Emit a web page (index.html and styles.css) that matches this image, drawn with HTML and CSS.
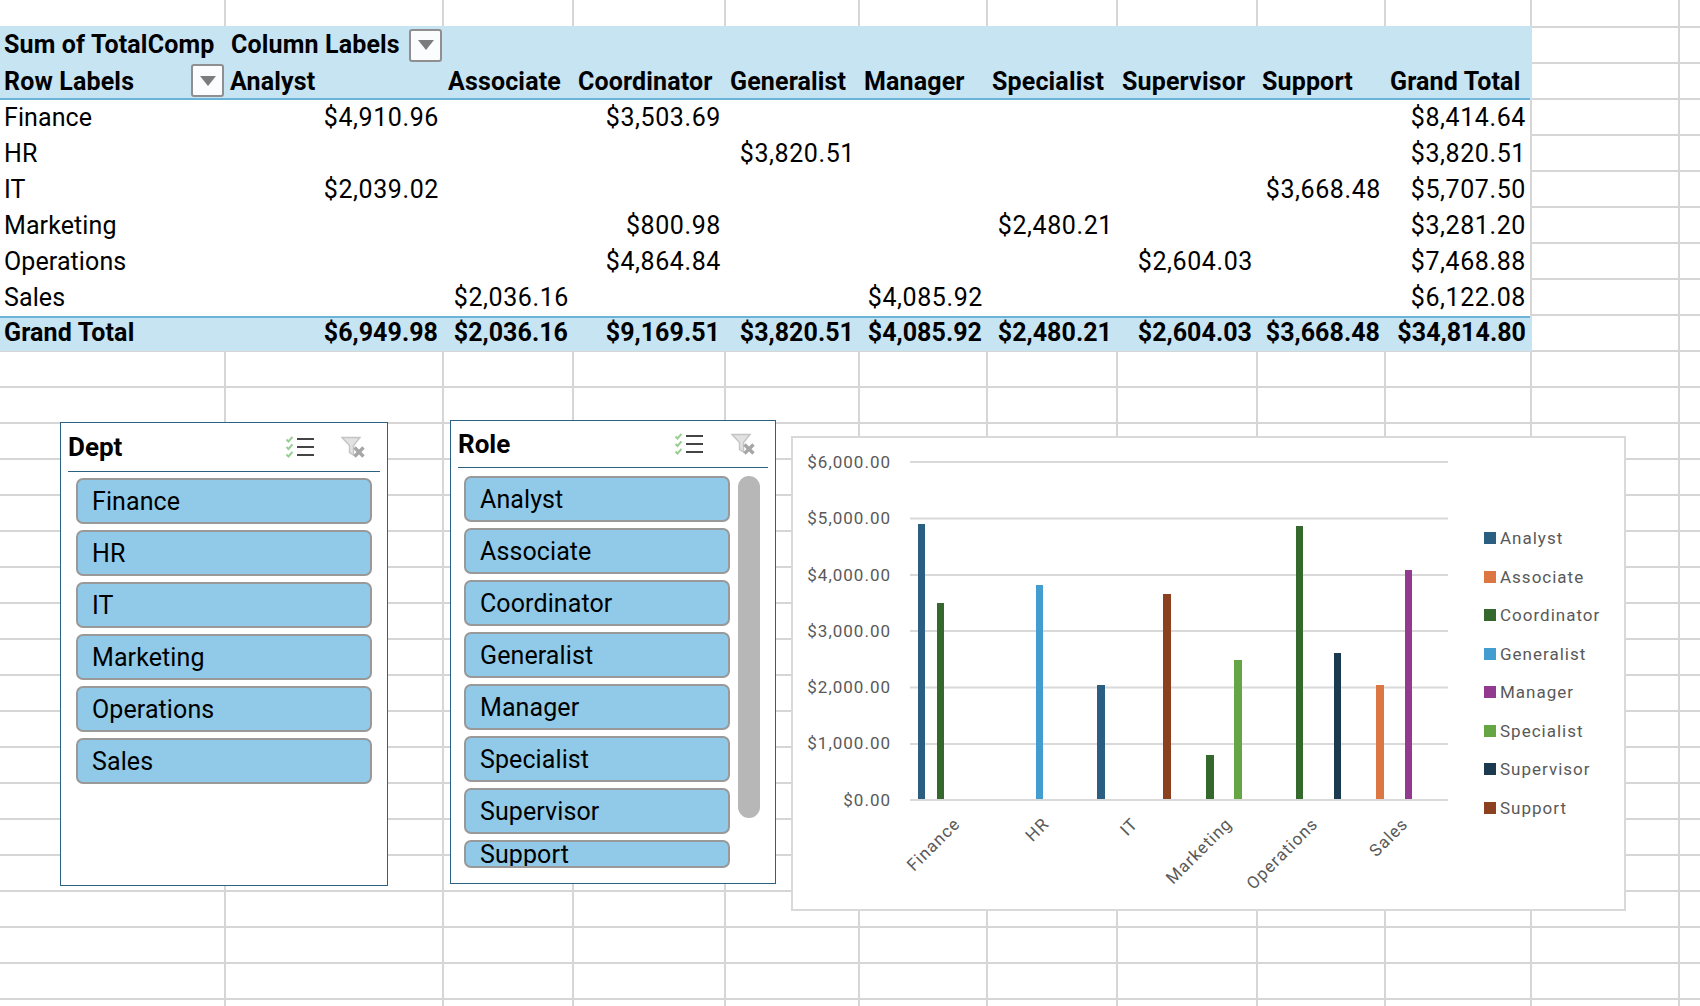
FILE: index.html
```html
<!DOCTYPE html>
<html lang="en">
<head>
<meta charset="utf-8">
<title>Pivot table</title>
<link rel="stylesheet" href="styles.css">
</head>
<body>
<main class="sheet">
  <section class="pivot">
    <div class="row head head-top">
      <div class="cell strong">Sum of TotalComp</div>
      <div class="cell strong span-col">Column Labels <button class="drop drop-col" aria-label="Filter columns"><span class="tri"></span></button></div>
    </div>
    <div class="row head head-bottom">
      <div class="cell strong span-row">Row Labels <button class="drop drop-row" aria-label="Filter rows"><span class="tri"></span></button></div>
      <div class="cell strong">Analyst</div>
      <div class="cell strong">Associate</div>
      <div class="cell strong">Coordinator</div>
      <div class="cell strong">Generalist</div>
      <div class="cell strong">Manager</div>
      <div class="cell strong">Specialist</div>
      <div class="cell strong">Supervisor</div>
      <div class="cell strong">Support</div>
      <div class="cell strong">Grand Total</div>
    </div>
    <div class="row body">
      <div class="cell">Finance</div><div class="cell num">$4,910.96</div><div class="cell num"></div><div class="cell num">$3,503.69</div><div class="cell num"></div><div class="cell num"></div><div class="cell num"></div><div class="cell num"></div><div class="cell num"></div><div class="cell num">$8,414.64</div>
    </div>
    <div class="row body">
      <div class="cell">HR</div><div class="cell num"></div><div class="cell num"></div><div class="cell num"></div><div class="cell num">$3,820.51</div><div class="cell num"></div><div class="cell num"></div><div class="cell num"></div><div class="cell num"></div><div class="cell num">$3,820.51</div>
    </div>
    <div class="row body">
      <div class="cell">IT</div><div class="cell num">$2,039.02</div><div class="cell num"></div><div class="cell num"></div><div class="cell num"></div><div class="cell num"></div><div class="cell num"></div><div class="cell num"></div><div class="cell num">$3,668.48</div><div class="cell num">$5,707.50</div>
    </div>
    <div class="row body">
      <div class="cell">Marketing</div><div class="cell num"></div><div class="cell num"></div><div class="cell num">$800.98</div><div class="cell num"></div><div class="cell num"></div><div class="cell num">$2,480.21</div><div class="cell num"></div><div class="cell num"></div><div class="cell num">$3,281.20</div>
    </div>
    <div class="row body">
      <div class="cell">Operations</div><div class="cell num"></div><div class="cell num"></div><div class="cell num">$4,864.84</div><div class="cell num"></div><div class="cell num"></div><div class="cell num"></div><div class="cell num">$2,604.03</div><div class="cell num"></div><div class="cell num">$7,468.88</div>
    </div>
    <div class="row body">
      <div class="cell">Sales</div><div class="cell num"></div><div class="cell num">$2,036.16</div><div class="cell num"></div><div class="cell num"></div><div class="cell num">$4,085.92</div><div class="cell num"></div><div class="cell num"></div><div class="cell num"></div><div class="cell num">$6,122.08</div>
    </div>
    <div class="row total">
      <div class="cell strong">Grand Total</div><div class="cell strong num">$6,949.98</div><div class="cell strong num">$2,036.16</div><div class="cell strong num">$9,169.51</div><div class="cell strong num">$3,820.51</div><div class="cell strong num">$4,085.92</div><div class="cell strong num">$2,480.21</div><div class="cell strong num">$2,604.03</div><div class="cell strong num">$3,668.48</div><div class="cell strong num">$34,814.80</div>
    </div>
  </section>

  <section class="slicer slicer-dept">
    <header class="slicer-head">
      <h2 class="slicer-title">Dept</h2>
      <svg class="icon icon-multi" viewBox="0 0 28 22" aria-hidden="true"><path class="ic-check" d="M0.5 3.5 2.5 5.5 6.5 0.8M0.5 11 2.5 13 6.5 8.3M0.5 18.5 2.5 20.5 6.5 15.8"/><path class="ic-line" d="M11 3H28M11 11H28M11 19H28"/></svg>
      <svg class="icon icon-clear" viewBox="0 0 24 22" aria-hidden="true"><path class="ic-funnel" d="M1 1.5H19L12.5 9.5V19L8.5 16.5V9.5Z"/><path class="ic-x" d="M13.5 11.5 22.5 20.5M22.5 11.5 13.5 20.5"/></svg>
    </header>
    <div class="slicer-body">
      <div class="slicer-list">
        <div class="chip">Finance</div>
        <div class="chip">HR</div>
        <div class="chip">IT</div>
        <div class="chip">Marketing</div>
        <div class="chip">Operations</div>
        <div class="chip">Sales</div>
      </div>
    </div>
  </section>

  <section class="slicer slicer-role">
    <header class="slicer-head">
      <h2 class="slicer-title">Role</h2>
      <svg class="icon icon-multi" viewBox="0 0 28 22" aria-hidden="true"><path class="ic-check" d="M0.5 3.5 2.5 5.5 6.5 0.8M0.5 11 2.5 13 6.5 8.3M0.5 18.5 2.5 20.5 6.5 15.8"/><path class="ic-line" d="M11 3H28M11 11H28M11 19H28"/></svg>
      <svg class="icon icon-clear" viewBox="0 0 24 22" aria-hidden="true"><path class="ic-funnel" d="M1 1.5H19L12.5 9.5V19L8.5 16.5V9.5Z"/><path class="ic-x" d="M13.5 11.5 22.5 20.5M22.5 11.5 13.5 20.5"/></svg>
    </header>
    <div class="slicer-body">
      <div class="slicer-list">
        <div class="chip">Analyst</div>
        <div class="chip">Associate</div>
        <div class="chip">Coordinator</div>
        <div class="chip">Generalist</div>
        <div class="chip">Manager</div>
        <div class="chip">Specialist</div>
        <div class="chip">Supervisor</div>
        <div class="chip chip-cut">Support</div>
      </div>
      <div class="scroll-thumb"></div>
    </div>
  </section>

  <figure class="chart">
    <svg class="plot" viewBox="793 438 690 473" aria-label="Clustered column chart">
      <g class="grid-lines">
        <path d="M910 462H1448M910 518.5H1448M910 575H1448M910 631H1448M910 687.5H1448M910 744H1448M910 800H1448"/>
      </g>
      <g class="y-labels">
        <text x="891" y="468">$6,000.00</text>
        <text x="891" y="524">$5,000.00</text>
        <text x="891" y="580.5">$4,000.00</text>
        <text x="891" y="637">$3,000.00</text>
        <text x="891" y="693">$2,000.00</text>
        <text x="891" y="749">$1,000.00</text>
        <text x="891" y="805.5">$0.00</text>
      </g>
      <g>
        <rect class="s-analyst" x="918" y="524" width="7" height="275"/>
        <rect class="s-coord" x="937" y="603" width="7" height="196"/>
        <rect class="s-general" x="1036" y="585" width="7" height="214"/>
        <rect class="s-analyst" x="1097" y="685" width="8" height="114"/>
        <rect class="s-support" x="1163" y="594" width="8" height="205"/>
        <rect class="s-coord" x="1206" y="755" width="8" height="44"/>
        <rect class="s-spec" x="1234" y="660" width="8" height="139"/>
        <rect class="s-coord" x="1296" y="526" width="7" height="273"/>
        <rect class="s-super" x="1334" y="653" width="7" height="146"/>
        <rect class="s-assoc" x="1376" y="685" width="8" height="114"/>
        <rect class="s-manager" x="1405" y="570" width="7" height="229"/>
      </g>
      <g class="x-labels">
        <text transform="translate(961 825) rotate(-45)">Finance</text>
        <text transform="translate(1050 825) rotate(-45)">HR</text>
        <text transform="translate(1139 825) rotate(-45)">IT</text>
        <text transform="translate(1233 825) rotate(-45)">Marketing</text>
        <text transform="translate(1319 825) rotate(-45)">Operations</text>
        <text transform="translate(1409 825) rotate(-45)">Sales</text>
      </g>
    </svg>
    <ul class="legend">
      <li class="legend-item"><i class="swatch bg-analyst"></i>Analyst</li>
      <li class="legend-item"><i class="swatch bg-assoc"></i>Associate</li>
      <li class="legend-item"><i class="swatch bg-coord"></i>Coordinator</li>
      <li class="legend-item"><i class="swatch bg-general"></i>Generalist</li>
      <li class="legend-item"><i class="swatch bg-manager"></i>Manager</li>
      <li class="legend-item"><i class="swatch bg-spec"></i>Specialist</li>
      <li class="legend-item"><i class="swatch bg-super"></i>Supervisor</li>
      <li class="legend-item"><i class="swatch bg-support"></i>Support</li>
    </ul>
  </figure>
</main>
</body>
</html>
```

FILE: styles.css
```css
:root {
  --line: #d6d6d6;
  --fill: #c7e4f3;
  --blue-line: #6cb3da;
  --analyst: #2a5f82;
  --assoc: #dc7642;
  --coord: #35682d;
  --general: #449dd1;
  --manager: #923a90;
  --spec: #65a543;
  --super: #1b3a4f;
  --support: #8b411f;
}

* { box-sizing: border-box; }

html, body { margin: 0; padding: 0; background: #fff; }

body {
  font-family: Roboto, "Liberation Sans", sans-serif;
  color: #000;
  overflow: hidden;
}

.sheet {
  position: relative;
  width: 1700px;
  height: 1006px;
  padding-top: 26px;
  overflow: hidden;
  --v: linear-gradient(var(--line), var(--line));
  background:
    var(--v) 224px 0 / 2px 100% no-repeat,
    var(--v) 442px 0 / 2px 100% no-repeat,
    var(--v) 572px 0 / 2px 100% no-repeat,
    var(--v) 724px 0 / 2px 100% no-repeat,
    var(--v) 858px 0 / 2px 100% no-repeat,
    var(--v) 986px 0 / 2px 100% no-repeat,
    var(--v) 1116px 0 / 2px 100% no-repeat,
    var(--v) 1256px 0 / 2px 100% no-repeat,
    var(--v) 1384px 0 / 2px 100% no-repeat,
    var(--v) 1530px 0 / 2px 100% no-repeat,
    var(--v) 1678px 0 / 2px 100% no-repeat,
    repeating-linear-gradient(to bottom, transparent 0 26px, var(--line) 26px 28px, transparent 28px 36px);
}

/* Pivot table */
.pivot { width: 1530px; }

.row {
  display: grid;
  grid-template-columns: 225px 218px 130px 152px 134px 128px 130px 140px 128px 145px;
  align-items: center;
  height: 36px;
  font-size: 25px;
  line-height: 36px;
}

.head { background: var(--fill); box-shadow: 2px 0 0 var(--fill); }
.head-top { height: 37px; }
.head-bottom { height: 37px; padding-top: 1px; border-bottom: 2px solid var(--blue-line); box-shadow: 2px 0 0 var(--fill); }
.body { background: #fff; }
.total {
  height: 35px;
  line-height: 30px;
  align-content: start;
  background: var(--fill);
  border-top: 2px solid var(--blue-line);
  box-shadow: 2px 0 0 var(--fill);
}

.cell {
  padding: 0 5px;
  white-space: nowrap;
  letter-spacing: 0.1px;
}
.cell:first-child { padding-left: 4px; }
.num { text-align: right; letter-spacing: 0.6px; padding-right: 4px; }
.strong { font-weight: 700; letter-spacing: 0.15px; }
.strong.num { letter-spacing: 0.05px; padding-right: 5px; }
.strong.num:last-child { padding-right: 4px; }

.span-col {
  grid-column: 2 / span 2;
  position: relative;
  padding-left: 6px;
}
.span-row { position: relative; }

.drop {
  position: absolute;
  width: 33px;
  height: 33px;
  padding: 0;
  background: #fbfcfd;
  border: 2px solid #8f8f8f;
  border-radius: 3px;
  display: flex;
  align-items: center;
  justify-content: center;
}
.drop-col { left: 184px; top: 2px; }
.drop-row { left: 191px; top: 0; }
.tri {
  width: 0;
  height: 0;
  border-left: 8px solid transparent;
  border-right: 8px solid transparent;
  border-top: 10px solid #7c7c7c;
}

/* Slicers */
.slicer {
  position: absolute;
  background: #fff;
  border: 1px solid #2c6183;
  padding: 0 7px;
}
.slicer-dept { left: 60px; top: 422px; width: 328px; height: 464px; }
.slicer-role { left: 450px; top: 420px; width: 326px; height: 464px; }

.slicer-head {
  display: flex;
  align-items: center;
  border-bottom: 1px solid #2c6183;
}
.slicer-dept .slicer-head { height: 49px; }
.slicer-role .slicer-head { height: 47px; }

.slicer-title {
  margin: 0 auto 0 0;
  font-size: 26px;
  font-weight: 700;
  line-height: 30px;
}

.icon { display: block; width: 28px; height: 22px; fill: none; }
.icon-multi { width: 30px; margin-right: 26px; }
.icon-clear { width: 24px; margin-right: 15px; }
.slicer-role .icon-multi { margin-right: 27px; }
.slicer-role .icon-clear { margin-right: 13px; }

.ic-check { stroke: #97cf93; stroke-width: 2; }
.ic-line { stroke: #444; stroke-width: 2; }
.ic-funnel { fill: #e2e2e2; stroke: #c4c4c4; stroke-width: 1.4; }
.ic-x { stroke: #a6a6a6; stroke-width: 3.4; }

.slicer-body {
  display: flex;
  align-items: flex-start;
  gap: 8px;
  padding: 6px 8px 0;
}
.slicer-role .slicer-body { padding: 8px 0 0 6px; }

.slicer-list { display: flex; flex-direction: column; gap: 6px; flex: 1; }

.chip {
  height: 46px;
  padding-left: 14px;
  font-size: 25px;
  line-height: 44px;
  letter-spacing: 0.1px;
  background: #90cae8;
  border: 2px solid #999;
  border-radius: 7px;
  overflow: hidden;
}
.chip-cut { height: 28px; line-height: 25px; }

.scroll-thumb {
  flex: none;
  width: 22px;
  height: 342px;
  margin-right: 8px;
  background: #b7b7b7;
  border-radius: 11px;
}

/* Chart */
.chart {
  position: absolute;
  left: 791px;
  top: 436px;
  width: 835px;
  height: 475px;
  margin: 0;
  display: flex;
  background: #fff;
  border: 2px solid #d9d9d9;
}
.plot { display: block; width: 690px; height: 473px; flex: none; }
.grid-lines path { stroke: #d9d9d9; stroke-width: 2; fill: none; }
.plot text { font-size: 17px; fill: #595959; letter-spacing: 1px; }
.y-labels text { text-anchor: end; }
.x-labels text { text-anchor: end; }

.s-analyst { fill: var(--analyst); }
.s-assoc { fill: var(--assoc); }
.s-coord { fill: var(--coord); }
.s-general { fill: var(--general); }
.s-manager { fill: var(--manager); }
.s-spec { fill: var(--spec); }
.s-super { fill: var(--super); }
.s-support { fill: var(--support); }

.legend {
  list-style: none;
  margin: 0;
  padding: 81px 0 0 1px;
}
.legend-item {
  display: flex;
  align-items: center;
  gap: 4px;
  height: 38.5px;
  font-size: 17px;
  color: #595959;
  letter-spacing: 1px;
}
.swatch { display: block; width: 12px; height: 12px; }
.bg-analyst { background: var(--analyst); }
.bg-assoc { background: var(--assoc); }
.bg-coord { background: var(--coord); }
.bg-general { background: var(--general); }
.bg-manager { background: var(--manager); }
.bg-spec { background: var(--spec); }
.bg-super { background: var(--super); }
.bg-support { background: var(--support); }
```
